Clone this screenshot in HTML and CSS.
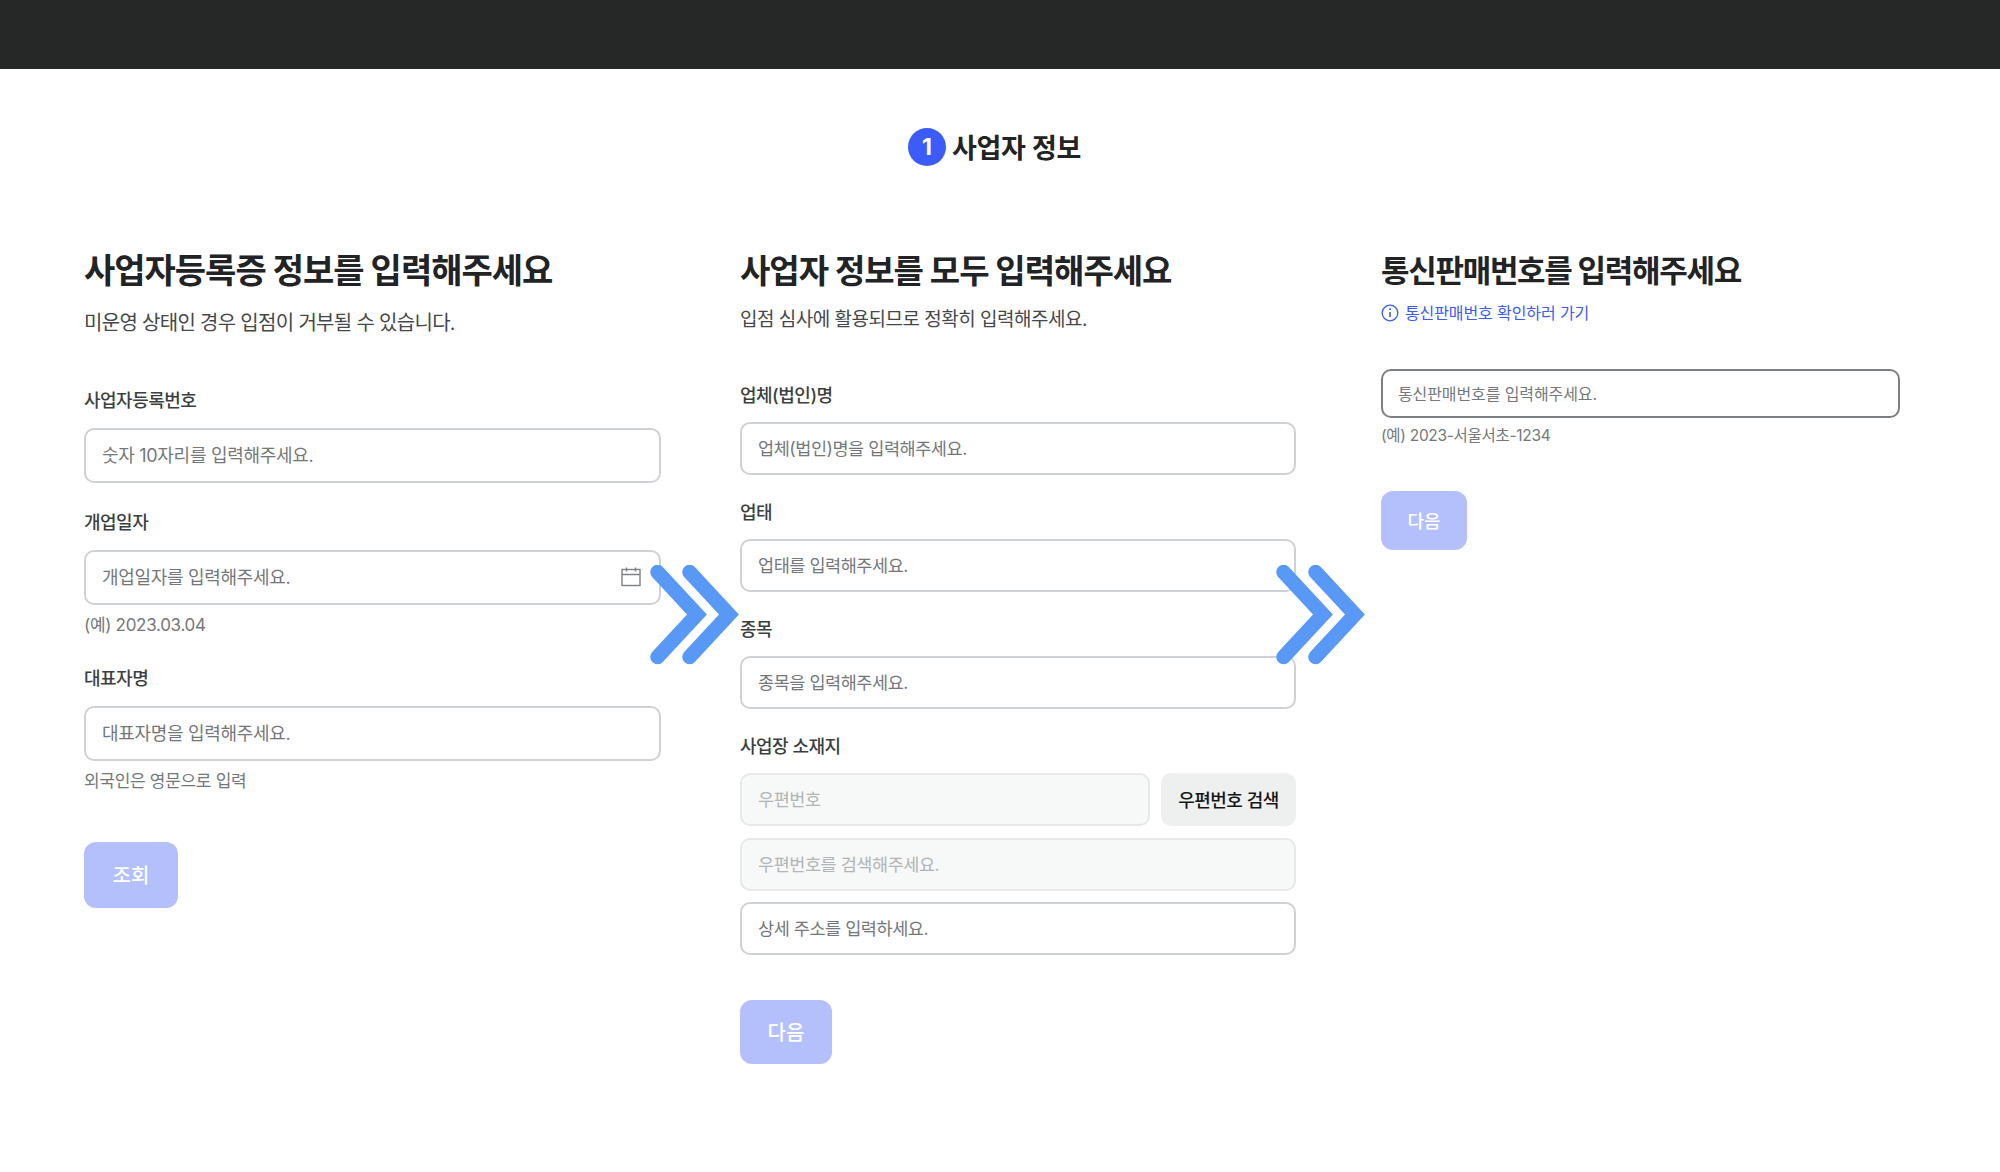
FILE: index.html
```html
<!DOCTYPE html>
<html lang="ko">
<head>
  <meta charset="UTF-8">
  <meta name="viewport" content="width=device-width, initial-scale=1.0">
  <title>사업자 정보</title>
  <link rel="stylesheet" href="styles.css">
</head>
<body>
  <div class="top-bar"></div>

  <div class="step-title">
    <span class="step-number">1</span>
    <span class="step-label">사업자 정보</span>
  </div>

  <div class="steps">
    <section class="panel panel-first">
      <h2 class="title">사업자등록증 정보를 입력해주세요</h2>
      <p class="subtitle">미운영 상태인 경우 입점이 거부될 수 있습니다.</p>

      <label class="field-label label-first">사업자등록번호</label>
      <input class="text-input" type="text" placeholder="숫자 10자리를 입력해주세요.">

      <label class="field-label">개업일자</label>
      <div class="date-input">
        <input class="text-input" type="text" placeholder="개업일자를 입력해주세요.">
        <svg class="calendar-icon" viewBox="0 0 20 20" fill="none" stroke="#7d8285" stroke-width="1.4">
          <rect x="1" y="2.5" width="18" height="16"/>
          <path d="M1 7.5h18M5.5 0.5v4M14.5 0.5v4"/>
        </svg>
      </div>
      <p class="hint">(예) 2023.03.04</p>

      <label class="field-label">대표자명</label>
      <input class="text-input" type="text" placeholder="대표자명을 입력해주세요.">
      <p class="hint">외국인은 영문으로 입력</p>

      <button class="submit-button">조회</button>
    </section>

    <section class="panel panel-second">
      <h2 class="title">사업자 정보를 모두 입력해주세요</h2>
      <p class="subtitle">입점 심사에 활용되므로 정확히 입력해주세요.</p>

      <label class="field-label label-first">업체(법인)명</label>
      <input class="text-input" type="text" placeholder="업체(법인)명을 입력해주세요.">

      <label class="field-label">업태</label>
      <input class="text-input" type="text" placeholder="업태를 입력해주세요.">

      <label class="field-label">종목</label>
      <input class="text-input" type="text" placeholder="종목을 입력해주세요.">

      <label class="field-label">사업장 소재지</label>
      <div class="address-group">
        <div class="zip-row">
          <input class="text-input" type="text" placeholder="우편번호" disabled>
          <button class="zip-button">우편번호 검색</button>
        </div>
        <input class="text-input" type="text" placeholder="우편번호를 검색해주세요." disabled>
        <input class="text-input" type="text" placeholder="상세 주소를 입력하세요.">
      </div>

      <button class="submit-button">다음</button>
    </section>

    <section class="panel panel-third">
      <h2 class="title">통신판매번호를 입력해주세요</h2>
      <a class="info-link">
        <svg class="info-icon" viewBox="0 0 18 18" fill="none" stroke="#3b5bfb" stroke-width="1.3">
          <circle cx="9" cy="9" r="7.8"/>
          <path d="M9 8v5" stroke-width="1.6"/>
          <circle cx="9" cy="5.3" r="1" fill="#3b5bfb" stroke="none"/>
        </svg>
        통신판매번호 확인하러 가기
      </a>

      <input class="text-input input-focused" type="text" placeholder="통신판매번호를 입력해주세요.">
      <p class="hint">(예) 2023-서울서초-1234</p>

      <button class="submit-button">다음</button>
    </section>

    <svg class="arrow arrow-first" viewBox="0 0 90 100" fill="none" stroke="#5899f8" stroke-width="14.5" stroke-linecap="round">
      <path d="M7.5 7L47 49.5L7.5 92"/>
      <path d="M39.5 7L79 49.5L39.5 92"/>
    </svg>
    <svg class="arrow arrow-second" viewBox="0 0 90 100" fill="none" stroke="#5899f8" stroke-width="14.5" stroke-linecap="round">
      <path d="M7.5 7L47 49.5L7.5 92"/>
      <path d="M39.5 7L79 49.5L39.5 92"/>
    </svg>
  </div>
</body>
</html>
```

FILE: styles.css
```css
:root {
  --primary-color: #3b5bfb;
  --disabled-color: #b3c0fb;
  --border-color: #cfd2d5;
  --title-color: #212325;
  --label-color: #3c3f41;
  --muted-color: #74787b;
}

* {
  box-sizing: border-box;
}

body {
  font-family: 'Inter', 'Noto Sans CJK KR', sans-serif;
  margin: 0;
  background-color: #ffffff;
  color: var(--title-color);
}

.top-bar {
  height: 69px;
  background-color: #262828;
}

.step-title {
  display: flex;
  justify-content: center;
  align-items: center;
  gap: 6px;
  margin-top: 59px;
  height: 37px;
  padding-right: 11px;
}

.step-number {
  width: 38px;
  height: 38px;
  border-radius: 50%;
  background-color: var(--primary-color);
  color: #ffffff;
  font-size: 23px;
  font-weight: 700;
  display: flex;
  align-items: center;
  justify-content: center;
}

.step-label {
  font-size: 27px;
  font-weight: 600;
  letter-spacing: -0.3px;
}

.steps {
  position: relative;
  display: flex;
  margin-top: 84px;
  padding-left: 84px;
}

.panel {
  display: flex;
  flex-direction: column;
  align-items: flex-start;
}

.panel-first {
  width: 577px;
  margin-right: 79px;
  --field-height: 55px;
}

.panel-second {
  width: 556px;
  margin-right: 85px;
  --field-height: 53px;
}

.panel-third {
  width: 519px;
  --field-height: 49px;
}

.title {
  font-size: 34px;
  line-height: 44px;
  font-weight: 700;
  letter-spacing: -1px;
  margin: 0;
  white-space: nowrap;
}

.panel-second .title {
  font-size: 33px;
  letter-spacing: -1px;
}

.panel-third .title {
  font-size: 31px;
  letter-spacing: -1.3px;
}

.subtitle {
  font-size: 20px;
  line-height: 28px;
  color: #45484a;
  letter-spacing: -0.7px;
  margin: 16px 0 0;
}

.panel-second .subtitle {
  font-size: 19px;
  letter-spacing: -0.5px;
  margin-top: 13px;
}

.field-label {
  display: block;
  font-size: 18px;
  line-height: 26px;
  font-weight: 500;
  color: var(--label-color);
  letter-spacing: -0.5px;
  margin-top: 27px;
  margin-bottom: 14px;
}

.label-first {
  margin-top: 51px;
}

.panel-second .field-label {
  margin-top: 25px;
  margin-bottom: 13px;
}

.panel-second .label-first {
  margin-top: 49px;
}

.text-input {
  display: block;
  width: 100%;
  height: var(--field-height);
  padding: 0 16px;
  font-family: inherit;
  font-size: 18px;
  letter-spacing: -0.3px;
  color: var(--label-color);
  background-color: #ffffff;
  border: 2px solid var(--border-color);
  border-radius: 10px;
  outline: none;
}

.panel-second .text-input {
  font-size: 17.5px;
  letter-spacing: -0.45px;
}

.text-input::placeholder {
  color: var(--muted-color);
  opacity: 1;
}

.text-input:disabled {
  background-color: #f7f8f8;
  border-color: #e6e8e9;
}

.text-input:disabled::placeholder {
  color: #b1b5b7;
}

.input-focused {
  border-color: #7d8083;
  font-size: 16px;
  letter-spacing: -0.1px;
  padding: 0 15px;
}

.date-input {
  position: relative;
  width: 100%;
}

.calendar-icon {
  position: absolute;
  right: 20px;
  top: 17px;
  width: 20px;
  height: 20px;
}

.hint {
  font-size: 17px;
  line-height: 24px;
  color: var(--muted-color);
  letter-spacing: -0.3px;
  margin: 8px 0 0;
}

.panel-first .hint + .field-label {
  margin-top: 29px;
}

.panel-third .hint {
  font-size: 15.5px;
  margin-top: 6px;
}

.submit-button {
  width: 94px;
  height: 66px;
  margin-top: 49px;
  padding: 0 0 2px;
  font-family: inherit;
  font-size: 20px;
  font-weight: 500;
  color: #ffffff;
  background-color: var(--disabled-color);
  border: none;
  border-radius: 12px;
}

.panel-second .submit-button {
  width: 92px;
  height: 64px;
  margin-top: 45px;
}

.panel-third .submit-button {
  width: 86px;
  height: 59px;
  margin-top: 43px;
  font-size: 18px;
}

.address-group {
  width: 100%;
  display: flex;
  flex-direction: column;
  gap: 11.5px;
}

.zip-row {
  display: flex;
  gap: 11px;
}

.zip-row .text-input {
  flex: 1;
}

.zip-button {
  flex: none;
  width: 135px;
  height: 53px;
  padding: 0 0 2px;
  font-family: inherit;
  font-size: 18px;
  font-weight: 500;
  letter-spacing: -0.5px;
  color: #141516;
  background-color: #eeefef;
  border: none;
  border-radius: 10px;
}

.info-link {
  display: flex;
  align-items: center;
  gap: 6px;
  font-size: 16px;
  line-height: 24px;
  letter-spacing: -0.1px;
  color: var(--primary-color);
  margin-top: 8px;
  margin-bottom: 44px;
}

.info-icon {
  width: 18px;
  height: 18px;
}

.arrow {
  position: absolute;
  top: 316px;
  width: 90px;
  height: 100px;
}

.arrow-first {
  left: 650px;
}

.arrow-second {
  left: 1276px;
}
```
